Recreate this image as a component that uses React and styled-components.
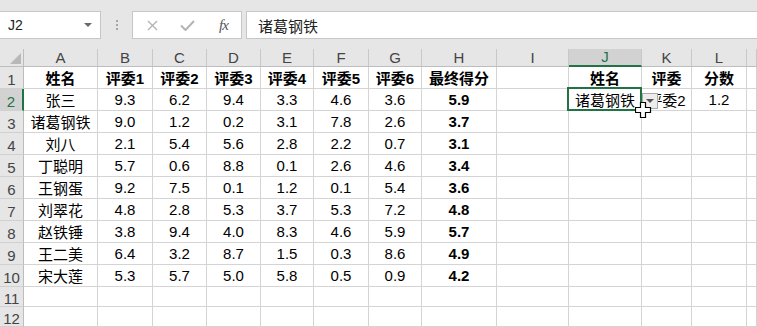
import React from 'react';
import styled, { createGlobalStyle } from 'styled-components';

const GlobalStyle = createGlobalStyle`
  html, body {
    margin: 0;
    padding: 0;
    background: #fff;
    overflow: hidden;
  }
  body {
    font-family: "Liberation Sans", "Noto Sans CJK SC", sans-serif;
    font-size: 15px;
    color: #000;
  }
`;

const Wrapper = styled.div`
  width: 757px;
  height: 327px;
  display: flex;
  flex-direction: column;
`;

const TopBar = styled.div`
  height: 49px;
  box-sizing: border-box;
  padding-top: 11px;
  background: #e6e6e6;
  display: flex;
  align-items: flex-start;
`;

const NameBox = styled.div`
  width: 101px;
  height: 28px;
  box-sizing: border-box;
  background: #fff;
  border: 1px solid #c6c6c6;
  border-left: none;
  display: flex;
  align-items: center;
  justify-content: space-between;
  padding: 0 8px 0 8px;
  font-size: 14px;
  color: #222;
`;

const Caret = styled.span`
  width: 0;
  height: 0;
  border-left: 4px solid transparent;
  border-right: 4px solid transparent;
  border-top: 4px solid #6a6a6a;
`;

const Grip = styled.div`
  width: 31px;
  height: 28px;
  display: flex;
  flex-direction: column;
  align-items: center;
  justify-content: center;
  gap: 2px;
`;

const GripDot = styled.span`
  width: 2px;
  height: 2px;
  background: #a6a6a6;
`;

const FxButtons = styled.div`
  width: 110px;
  height: 28px;
  box-sizing: border-box;
  background: #fff;
  border: 1px solid #c6c6c6;
  display: flex;
  align-items: center;
  padding-left: 14px;
  gap: 22px;
`;

const Fx = styled.span`
  font-family: "Liberation Serif", serif;
  font-style: italic;
  font-size: 15px;
  color: #555;
  margin-left: 2px;
  letter-spacing: -1px;
`;

const FormulaInput = styled.div`
  flex: 1;
  margin-left: 4px;
  height: 28px;
  box-sizing: border-box;
  background: #fff;
  border: 1px solid #c6c6c6;
  border-right: none;
  display: flex;
  align-items: center;
  padding-left: 11px;
  font-family: "Noto Sans CJK SC", sans-serif;
  font-size: 15px;
  color: #222;
`;

const Sheet = styled.div`
  display: grid;
  grid-template-columns: 24px 74px 55px 54px 54px 53px 55px 53px 75px 72px 73px 50px 55px 1fr;
  grid-template-rows: 18px repeat(10, 22px) repeat(2, 20px);
`;

const Corner = styled.div`
  background: #e6e6e6;
  border-right: 1px solid #bdbdbd;
  border-bottom: 1px solid #bdbdbd;
  box-sizing: border-box;
  display: flex;
  align-items: flex-end;
  justify-content: flex-end;
  padding: 0 2px 2px 0;
`;

const CornerMark = styled.span`
  width: 0;
  height: 0;
  border-left: 11px solid transparent;
  border-bottom: 11px solid #b8b8b8;
`;

const ColHead = styled.div`
  box-sizing: border-box;
  background: ${p => (p.$active ? '#d2d2d2' : '#e6e6e6')};
  color: ${p => (p.$active ? '#217346' : '#444')};
  border-right: 1px solid #c8c8c8;
  border-bottom: ${p => (p.$active ? '2px solid #217346' : '1px solid #bdbdbd')};
  display: flex;
  align-items: flex-end;
  justify-content: center;
  font-size: 15px;
  line-height: 16px;
  overflow: hidden;
`;

const RowHead = styled.div`
  box-sizing: border-box;
  background: ${p => (p.$active ? '#d2d2d2' : '#e6e6e6')};
  color: ${p => (p.$active ? '#217346' : '#444')};
  border-right: ${p => (p.$active ? '2px solid #217346' : '1px solid #bdbdbd')};
  border-bottom: 1px solid #d0d0d0;
  display: flex;
  align-items: center;
  justify-content: center;
  padding-top: 3px;
  font-size: 15px;
`;

const Cell = styled.div`
  position: relative;
  box-sizing: border-box;
  border-right: 1px solid #d4d4d4;
  border-bottom: 1px solid #d4d4d4;
  display: flex;
  align-items: center;
  justify-content: center;
  white-space: nowrap;
  font-weight: ${p => (p.$bold ? 700 : 400)};
  font-size: 15px;
`;

const Selection = styled.div`
  position: absolute;
  top: -2px;
  left: -2px;
  right: -1px;
  bottom: -1px;
  border: 2px solid #217346;
  pointer-events: none;
`;

const ListButton = styled.div`
  position: absolute;
  left: calc(100% + 1px);
  top: 4px;
  width: 16px;
  height: 16px;
  box-sizing: border-box;
  background: #ececec;
  border: 1px solid #a9a9a9;
  display: flex;
  align-items: center;
  justify-content: center;
  z-index: 2;
`;

const ListCaret = styled.span`
  width: 0;
  height: 0;
  border-left: 4px solid transparent;
  border-right: 4px solid transparent;
  border-top: 4px solid #555;
`;

const Pointer = styled.svg`
  position: absolute;
  left: 66px;
  top: 13px;
  z-index: 3;
`;

const columns = ['A', 'B', 'C', 'D', 'E', 'F', 'G', 'H', 'I', 'J', 'K', 'L', ''];

const rows = [
  ['姓名', '评委1', '评委2', '评委3', '评委4', '评委5', '评委6', '最终得分', '', '姓名', '评委', '分数', ''],
  ['张三', '9.3', '6.2', '9.4', '3.3', '4.6', '3.6', '5.9', '', '诸葛钢铁', '评委2', '1.2', ''],
  ['诸葛钢铁', '9.0', '1.2', '0.2', '3.1', '7.8', '2.6', '3.7'],
  ['刘八', '2.1', '5.4', '5.6', '2.8', '2.2', '0.7', '3.1'],
  ['丁聪明', '5.7', '0.6', '8.8', '0.1', '2.6', '4.6', '3.4'],
  ['王钢蛋', '9.2', '7.5', '0.1', '1.2', '0.1', '5.4', '3.6'],
  ['刘翠花', '4.8', '2.8', '5.3', '3.7', '5.3', '7.2', '4.8'],
  ['赵铁锤', '3.8', '9.4', '4.0', '8.3', '4.6', '5.9', '5.7'],
  ['王二美', '6.4', '3.2', '8.7', '1.5', '0.3', '8.6', '4.9'],
  ['宋大莲', '5.3', '5.7', '5.0', '5.8', '0.5', '0.9', '4.2'],
  [],
  [],
];

const CloseIcon = () => (
  <svg width="11" height="11" viewBox="0 0 11 11">
    <path d="M1 1 L10 10 M10 1 L1 10" stroke="#b4b4b4" strokeWidth="1.4" fill="none" />
  </svg>
);

const CheckIcon = () => (
  <svg width="15" height="11" viewBox="0 0 15 11">
    <path d="M1 5.5 L5.5 10 L14 1" stroke="#b4b4b4" strokeWidth="2" fill="none" />
  </svg>
);

const PlusCursor = () => (
  <Pointer width="17" height="17" viewBox="0 0 17 17">
    <path
      d="M5.5 0.5 H10.5 V5.5 H15.5 V10.5 H10.5 V15.5 H5.5 V10.5 H0.5 V5.5 H5.5 Z"
      fill="#fff"
      stroke="#000"
      strokeWidth="1.2"
    />
  </Pointer>
);

const App = () => {
  return (
    <Wrapper>
      <GlobalStyle />
      <TopBar>
        <NameBox>
          J2
          <Caret />
        </NameBox>
        <Grip>
          <GripDot />
          <GripDot />
          <GripDot />
        </Grip>
        <FxButtons>
          <CloseIcon />
          <CheckIcon />
          <Fx>fx</Fx>
        </FxButtons>
        <FormulaInput>诸葛钢铁</FormulaInput>
      </TopBar>

      <Sheet>
        <Corner>
          <CornerMark />
        </Corner>
        {columns.map((c, i) => (
          <ColHead key={i} $active={c === 'J'}>{c}</ColHead>
        ))}

        {rows.map((row, r) => (
          <React.Fragment key={r}>
            <RowHead $active={r === 1}>{r + 1}</RowHead>
            {columns.map((c, i) => {
              const value = row[i] || '';
              const bold = r === 0 || (c === 'H' && value !== '');
              const selected = r === 1 && c === 'J';
              return (
                <Cell key={i} $bold={bold}>
                  {value}
                  {selected && (
                    <>
                      <Selection />
                      <ListButton>
                        <ListCaret />
                      </ListButton>
                      <PlusCursor />
                    </>
                  )}
                </Cell>
              );
            })}
          </React.Fragment>
        ))}
      </Sheet>
    </Wrapper>
  );
};

export default App;
